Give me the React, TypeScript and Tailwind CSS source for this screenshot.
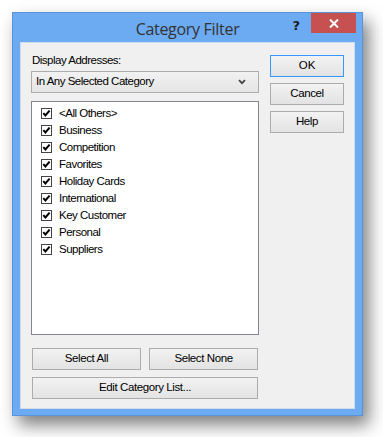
const categories = [
  "<All Others>",
  "Business",
  "Competition",
  "Favorites",
  "Holiday Cards",
  "International",
  "Key Customer",
  "Personal",
  "Suppliers",
];

const btn =
  "flex items-center justify-center h-[22px] border border-[#acacac] bg-gradient-to-b from-[#f2f2f2] to-[#e3e3e3] text-[11.5px] text-black tracking-[-0.4px]";

const CheckRow = ({ label }: { label: string }) => (
  <div className="flex items-center h-[17px] pl-[9px]">
    <span className="flex items-center justify-center w-[11px] h-[11px] border border-[#444] bg-white">
      <svg width="9" height="9" viewBox="0 0 9 9">
        <polyline
          points="1.3,4.2 3.4,6.5 7.6,1.6"
          fill="none"
          stroke="#000"
          strokeWidth="2"
        />
      </svg>
    </span>
    <span className="ml-[7px] text-[11.5px] text-black tracking-[-0.5px]">
      {label}
    </span>
  </div>
);

export default function App() {
  return (
    <div className="w-[383px] h-[437px] bg-white pt-[12px] pl-[12px] font-['Liberation_Sans',Arial,sans-serif]">
      <div className="w-[351px] h-[404px] border border-[#5993d8] bg-[#6caaf1] flex flex-col shadow-[6px_9px_16px_rgba(0,0,0,0.5)]">
        {/* title bar */}
        <div className="h-[29px] grid grid-cols-[1fr_auto_1fr]">
          <div />
          <div className="flex items-center pt-[2px] text-[16px] text-[#333] font-['Open_Sans','Noto_Sans',sans-serif] tracking-[-0.3px]">
            Category Filter
          </div>
          <div className="flex justify-end items-start pr-[6px]">
            <span className="mt-[3px] mr-[11px] text-[13px] font-bold text-[#1a1a1a] font-['DejaVu_Sans',sans-serif]">
              ?
            </span>
            <div className="w-[45px] h-[20px] bg-[#c75050] flex items-center justify-center">
              <svg width="10" height="9" viewBox="0 0 10 9">
                <path
                  d="M1 0.5 L9 8.5 M9 0.5 L1 8.5"
                  stroke="#fff"
                  strokeWidth="2"
                />
              </svg>
            </div>
          </div>
        </div>

        {/* client area */}
        <div className="mx-[7px] h-[367px] border border-[#cfdcec] bg-[#f0f0f0] flex">
          <div className="ml-[10px] w-[228px] pt-[10px] flex flex-col">
            <div className="pl-[1px] leading-[14px] text-[11.5px] text-black tracking-[-0.5px]">
              Display Addresses:
            </div>
            <div className="mt-[4px] h-[22px] border border-[#acacac] bg-gradient-to-b from-[#f2f2f2] to-[#e5e5e5] flex items-center pl-[4px] pr-[12px]">
              <span className="flex-1 text-[11.5px] text-black tracking-[-0.5px]">
                In Any Selected Category
              </span>
              <svg width="8" height="6" viewBox="0 0 8 6">
                <polyline
                  points="1,1.2 4,4.2 7,1.2"
                  fill="none"
                  stroke="#444"
                  strokeWidth="1.8"
                />
              </svg>
            </div>
            <div className="mt-[8px] h-[234px] border border-[#828790] bg-white pt-[3px]">
              {categories.map((c) => (
                <CheckRow key={c} label={c} />
              ))}
            </div>
            <div className="mt-[13px] px-[1px] flex gap-[8px]">
              <div className={`${btn} w-[109px]`}>Select All</div>
              <div className={`${btn} w-[109px]`}>Select None</div>
            </div>
            <div className="mt-[7px] px-[1px]">
              <div className={`${btn} w-[226px]`}>Edit Category List...</div>
            </div>
          </div>

          <div className="ml-[11px] pt-[12px] flex flex-col gap-[6px]">
            <div className="flex items-center justify-center w-[74px] h-[22px] border border-[#3399ff] bg-gradient-to-b from-[#f2f2f2] to-[#e3e3e3] text-[11.5px] text-black">
              OK
            </div>
            <div className={`${btn} w-[74px]`}>Cancel</div>
            <div className={`${btn} w-[74px]`}>Help</div>
          </div>
        </div>
      </div>
    </div>
  );
}
